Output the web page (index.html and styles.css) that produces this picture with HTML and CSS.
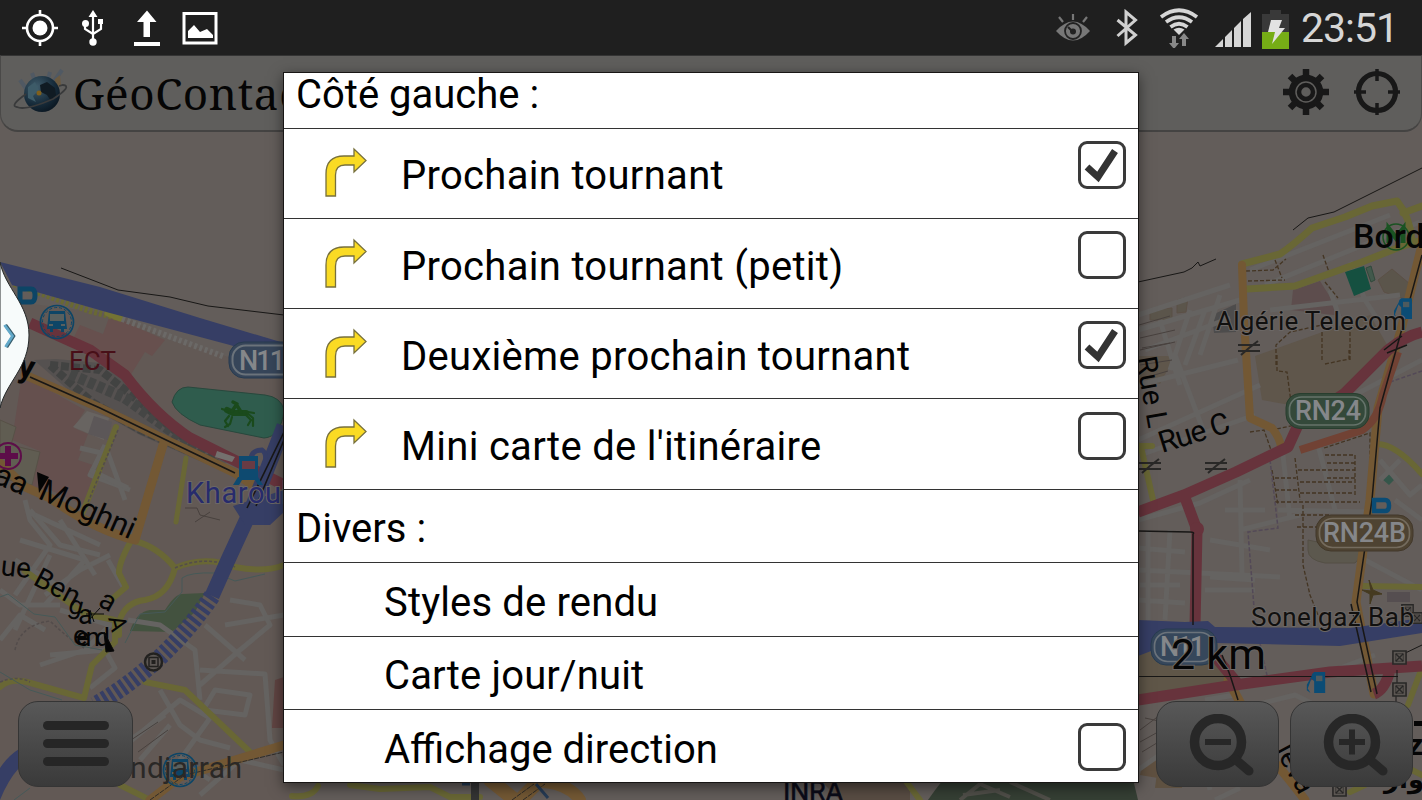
FILE: index.html
```html
<!DOCTYPE html>
<html lang="fr">
<head>
    <meta charset="UTF-8">
    <meta name="viewport" content="width=device-width, initial-scale=1.0">
    <title>GéoContact</title>
    <link rel="stylesheet" href="styles.css">
</head>
<body>

<!-- shared icons -->
<svg class="defs" width="0" height="0">
    <symbol id="turn" viewBox="0 0 44 52">
        <path d="M2 49V27Q2 9 20 9H30V2L42 13.500L30 25V18H21Q11.500 18 11.500 28V49Z" fill="#fadb24" stroke="#77703c" stroke-width="1.300"/>
    </symbol>
    <symbol id="bus" viewBox="0 0 36 36">
        <circle cx="18" cy="18" r="16.500" fill="none" stroke="#0d4566" stroke-width="1.700"/>
        <circle cx="18" cy="18" r="14.500" fill="none" stroke="#0d4566" stroke-width="1" stroke-dasharray="3 2"/>
        <path d="M10 7H26L28 25H25V28H22V25H14V28H11V25H8Z" fill="#0d4566"/>
        <path d="M11 10H25V17H11Z" fill="#58605f"/>
        <path d="M10 20h4v2h-4zM22 20h4v2h-4z" fill="#58605f"/>
    </symbol>
    <symbol id="fuel" viewBox="0 0 20 24">
        <path d="M6 2L8 0H20V23H8V10L5 7L1 18L4 23L0 20V14L5 5Z" fill="#0b4c75"/>
        <path d="M10 4h7v6h-7z" fill="#4e5a5e"/>
    </symbol>
    <symbol id="cross" viewBox="0 0 24 16">
        <path d="M1 5H23M1 11H23M4 15L12 8L21 1" stroke="#292827" stroke-width="2" fill="none"/>
    </symbol>
    <symbol id="pylon" viewBox="0 0 16 16">
        <path d="M1 1H15V15H1Z" fill="#5b5652" stroke="#292827" stroke-width="1.700"/>
        <path d="M4 4L12 12M12 4L4 12" stroke="#292827" stroke-width="1.500"/>
        <path d="M4 4H12V12H4Z" stroke="#292827" stroke-width=".7" fill="none"/>
    </symbol>
</svg>

<div class="screen">

    <!-- map background -->
    <svg class="map" viewBox="0 0 1422 800" width="1422" height="800">
        <rect width="1422" height="800" fill="#635d5a"/>

        <!-- areas -->
        <g>
            <path d="M0 300L120 315L170 340L290 375V800H0Z" fill="#625955"/>
            <path d="M70 345L80 325L103 334L110 315L165 340L152 356L145 352L130 376Z" fill="#67504e"/>
            <path d="M22 375L85 410L74 428L88 434L78 460L96 466L84 505L50 490L18 485L40 451L12 440Z" fill="#65504e"/>
            <path d="M87 411L109 418L104 440L73 427Z" fill="#686461"/>
            <path d="M94 416L112 422L108 440L88 434Z" fill="#5c5758"/>
            <path d="M0 420L16 427L11 445L40 452L32 485L0 478Z" fill="#605d52" stroke="#575147"/>
            <path d="M34 360L56 359L100 363L128 380L180 432L232 460L216 468L140 435L82 402Z" fill="#555150"/>
            <path d="M50 365L100 370L130 394L180 435L216 463L140 430L92 402Z" fill="none" stroke="#424342" stroke-width="8" stroke-dasharray="8 3"/>
            <path d="M70 374L125 398L205 455" fill="none" stroke="#454645" stroke-width="11" stroke-dasharray="7 3"/>
            <path d="M172 402Q176 387 188 387L265 395Q281 397 284 410Q281 437 264 438L200 425Q176 414 172 402Z" fill="#2f5c4d" stroke="#29483d"/>
            <path d="M130 631Q136 612 150 610L165 610Q175 594 182 594L205 593L195 612L172 632Z" fill="#43523f"/>
            <path d="M275 680L284 677V728H272Z" fill="#604442"/>
            <path d="M1138 356H1176L1163 378L1160 384L1138 378ZM1255 356L1370 315L1390 350L1330 412L1262 400Z" fill="#5f564b"/>
            <path d="M1293 290L1320 281L1342 316L1291 310Z" fill="#5d4d4d"/>
            <path d="M1378 280L1392 269L1410 284L1408 300L1384 292ZM1150 310L1172 308V320L1150 320ZM1177 300L1188 297L1186 312L1177 313Z" fill="#5b554b" stroke="#5b5046"/>
            <path d="M1212 315L1236 304V332L1214 333Z" fill="#4d4c4c"/>
            <path d="M1138 650L1225 665L1230 684L1138 700Z" fill="#5f5648"/>
            <path d="M1308 540L1365 552L1355 563L1325 563Q1308 560 1308 550Z" fill="#5c584e" stroke="#544f45"/>
            <path d="M1142 765L1158 758V778L1140 775Z" fill="#5f5040"/>
            <path d="M1157 773L1180 771L1182 788H1155Z" fill="#5e5141"/>
            <path d="M1387 592h23v10h-23z" fill="#554e50"/>
            <path d="M928 800Q942 780 948 775H1132L1138 800Z" fill="#353f34"/>
            <path d="M820 780H910V800H840Z" fill="#584c43"/>
            <path d="M1382 479l7-5 6 5-6 6z" fill="#35564a"/>
        </g>

        <!-- minor streets -->
        <g class="street">
            <path d="M105 445L90 475L130 490M108 453L125 500M25 500L30 520L50 545L15 595M30 510L60 545L100 555M20 540L85 560L45 605M50 555L15 630M45 595L80 570L110 555M60 610L110 625L85 650L40 665M0 640L20 615L45 630M50 655L105 650L115 668L90 688M0 590L20 605L60 605"/>
            <path d="M80 448L110 455M90 470L128 488M35 515L100 545M15 560L65 590M108 560L125 590M60 520L95 575M128 620L160 625L195 650L200 700M230 600L260 605L270 625L240 650L200 685M200 670L265 674L270 740L284 765M205 625L245 660M120 750L180 700L210 718L180 760L210 780M200 715L215 690L250 695L245 715L205 710M225 625L284 615M130 740L165 715M140 760L170 725M160 690L180 725L200 740L230 748M200 795L240 760L284 770"/>
            <path d="M1138 315L1230 285M1138 330L1240 300M1145 350L1230 318M1160 320L1180 385M1170 370L1190 310M1185 365L1205 310M1200 355L1220 295M1138 385L1238 360M1175 355L1205 435M1138 440L1260 385M1140 455L1255 415M1250 270L1390 215M1265 285L1420 222M1350 262L1365 300L1378 320M1330 290L1342 325M1270 310L1400 295"/>
            <path d="M1138 520L1200 503L1250 480M1148 530V620M1170 530L1165 620M1138 548L1185 552M1138 570L1280 577M1138 600L1185 603M1210 540L1270 550M1210 577L1255 580M1240 480L1242 575M1225 510H1265M1283 455L1290 520M1318 445L1335 510M1278 510L1370 512M1240 530L1300 515M1380 460L1410 495L1422 485M1345 400L1422 360M1380 480L1400 460M1395 500L1422 520M1365 560L1422 590M1205 590H1255M1140 585H1180M1255 705L1295 695L1325 710M1205 700L1235 695L1245 715M1138 770L1195 730L1210 790M1215 800L1240 788M1335 670L1375 655"/>
        </g>
        <path d="M1345 272L1364 266L1371 289L1354 296Z" fill="#155040"/>
        <path d="M1366 268L1371 266L1375 280L1371 282Z" fill="#42594c" stroke="#31493c"/>
        <g class="alley">
            <path d="M1139 325L1170 316M1140 338L1175 330M1142 348L1170 343M1140 350L1175 342M1140 365L1172 360M1144 378L1168 371M1145 718L1200 730M1140 730L1160 715M1140 742L1158 732M1142 752L1165 738M128 742l30-20M138 752l30-22"/>
            <path d="M185 508L197 508 200 515 220 520M195 522L210 512"/>
        </g>

        <!-- footpaths -->
        <g class="path">
            <path d="M1246 271L1273 270L1286 259M1248 281L1285 280M1275 260L1282 278M1323 255L1330 275M1325 282L1338 298M1276 365V345L1290 332L1322 325M1322 360V330M1350 360V325M1277 355V371L1287 372L1292 410M1325 364L1349 359V350M1250 432L1264 430L1271 450M1271 430L1296 425M1324 448L1370 433V500M1272 470L1278 505M1295 458L1300 500M1298 470H1355M1300 482H1352M1300 493H1352M1275 502H1360M1325 455H1355V495M1295 515H1330M1297 527H1330M1303 505V565L1310 595L1318 615M1275 478H1296M1275 490H1298M1327 463H1355M1327 478H1355"/>
        </g>
        <path d="M1270 460L1278 528L1248 532L1255 620L1268 680M1390 382L1422 371" fill="none" stroke="#534957" stroke-dasharray="4 2" stroke-width="1.500"/>

        <!-- secondary roads -->
        <g class="yellow">
            <path d="M116 427L83 512" stroke-width="6"/>
            <path d="M186 458L176 522" stroke-width="5"/>
            <path d="M135 541Q158 547 175 568Q205 555 235 567Q265 573 284 565M175 568Q168 596 145 600Q125 602 119 622V635M131 541Q119 562 119 573L126 587L112 599" stroke-width="6"/>
            <path d="M25 571L85 614L115 620V642L92 665L84 698L27 682Q10 678 0 687M145 682L185 690L250 752M120 785L150 800" stroke-width="6"/>
            <path d="M292 796Q312 798 318 786M350 785L380 789L430 787L450 797H480" stroke-width="6"/>
            <path d="M1242 264L1280 254Q1292 246 1312 228L1345 217L1372 206L1397 201Q1410 217 1412 240M1403 213L1422 206M1247 289L1295 286Q1320 277 1362 262L1400 247L1422 240" stroke-width="7"/>
            <path d="M1376 444Q1395 443 1422 474M1139 446H1152M1141 447L1153 500M1362 586L1422 587M1420 673L1408 705M1412 770L1422 775M1350 792L1365 785M905 780L920 800" stroke-width="6"/>
        </g>
        <path d="M14 284L90 311L118 318" fill="none" stroke="#696933" stroke-width="6" stroke-dasharray="3 2"/>
        <path d="M108 313L120 318" stroke="#747334" stroke-width="7" stroke-linecap="round"/>
        <path d="M122 319L225 357" fill="none" stroke="#6b6967" stroke-width="6" stroke-dasharray="3 2.500"/>
        <path d="M0 682Q18 675 30 682M118 430L84 512M175 568Q205 555 235 567M15 650Q20 625 50 621Q70 640 84 648" fill="none" stroke="#534c4b" stroke-width="1.500" stroke-dasharray="3 2"/>

        <!-- rivers and streams -->
        <g fill="none" stroke="#465958" stroke-width="1">
            <path d="M0 597L8 594L34 614L55 617L75 645L102 650M125 643L140 614L165 612L182 592V578Q190 572 215 573L235 581L265 574M0 672L30 690L62 700M14 800L30 788"/>
        </g>

        <!-- primary roads -->
        <g class="orange">
            <path d="M25 375L100 408L162 438L235 473L260 490" stroke-width="9"/>
            <path d="M163 445L135 540Q95 530 50 498L25 487L0 463" stroke-width="9"/>
            <path d="M150 800L180 777L284 745" stroke-width="9"/>
            <path d="M490 780L515 800M520 800L540 780" stroke-width="14"/>
            <path d="M545 782Q570 785 580 800" stroke-width="12"/>
            <path d="M1242 265L1244 320L1250 418L1272 428Q1280 438 1281 447" stroke-width="8"/>
            <path d="M1422 245L1401 330L1378 408L1370 500L1356 602L1374 694M1228 680L1241 704M1277 765Q1290 780 1305 800" stroke-width="9"/>
        </g>
        <g class="red">
            <path d="M30 323L90 350L125 375Q155 415 190 438L250 468L284 485" stroke-width="11"/>
            <path d="M1138 512L1184 495L1236 472L1288 447L1298 425L1345 393L1388 350Q1405 336 1422 332M1184 495L1197 530L1195 626L1218 660L1238 684M1138 700L1235 685L1330 672L1422 666M1374 694Q1385 690 1390 670" stroke-width="11"/>
        </g>
        <circle cx="1197" cy="529" r="7" fill="#67333c"/>
        <path d="M1300 450L1362 430Q1378 420 1383 395L1398 352" fill="none" stroke="#714234" stroke-width="8"/>
        <g class="blue">
            <path d="M0 262L100 287L200 318L284 343V362L230 345L110 313L12 285Z" fill="#363e65"/>
            <path d="M284 426L252 508L228 560L212 596" fill="none" stroke="#363e65" stroke-width="15"/>
            <path d="M233 506L284 490V512L270 525H245Z" fill="#363e65"/>
            <path d="M251 462Q250 450 262 450Q270 455 260 480" fill="none" stroke="#363e65" stroke-width="5"/>
            <path d="M212 596Q165 665 95 705" fill="none" stroke="#363e65" stroke-width="17" stroke-dasharray="4 3"/>
            <path d="M19 749V768Q8 780 0 800V768Q8 756 19 749Z" fill="#363e65"/>
            <path d="M1138 620L1185 622L1208 621L1215 627L1350 628L1422 618V633L1340 646L1215 643L1180 640L1138 656Z" fill="#363e65"/>
        </g>

        <!-- coastline and rails -->
        <g fill="none" stroke="#181716" stroke-width="1">
            <path d="M61 268L118 290L170 297L208 306L284 315M1138 282L1184 272L1192 268L1198 262L1200 266L1216 259M1293 230L1308 218L1334 212L1422 168"/>
            <path d="M30 377L100 408L162 438L235 473M284 432L247 508M284 440L256 506" stroke-width="1.600"/>
            <path d="M1422 255L1403 325L1380 408L1372 500L1357 602L1377 694M1351 604L1371 692M1193 625V534Q1195 532 1190 532L1138 531M1222 655L1230 675L1238 700M1384 350L1402 336M1387 353L1407 345" stroke-width="1.500"/>
            <path d="M1138 676.500H1398M1397 670V683M1397 657L1422 645M1396 693V706"/>
            <path d="M512 800L534 784M523 800L545 784M150 800L185 775L284 752" stroke="#2f2c28" stroke-dasharray="5 1"/>
        </g>
        <path d="M475 772V800" stroke="#343434" stroke-width="8"/>
        <path d="M462 784H470M536 784L548 798" stroke="#263b55" stroke-width="3"/>
        <path d="M217 451L235 457L232 462L215 457Z" fill="#74706e"/>
        <path d="M960 800L980 784L1010 797M1010 782L1050 800M963 795L1000 790" fill="none" stroke="#504f49" stroke-width="4"/>

        <!-- poi -->
        <path d="M20 289H31Q35 289 35 295.500Q35 302 31 302H20Z" fill="none" stroke="#0d4566" stroke-width="5"/>
        <use href="#bus" x="39" y="304" width="36" height="36"/>
        <use href="#bus" x="162" y="752" width="36" height="36"/>
        <g fill="#0e4a70">
            <path d="M239 456H258V477H239Z"/>
            <path d="M238 477L233 485H239L242 480H255L258 485H263L258 477Z"/>
            <path d="M242 461h13v8h-13z" fill="#693b44"/>
        </g>
        <g fill="none" stroke="#1a4a1c" stroke-linecap="round" stroke-linejoin="round">
            <path d="M227 410L233 413L246 413" stroke-width="6"/>
            <path d="M232 411L237 404L233 402M236 404L241 412" stroke-width="3.500"/>
            <path d="M228 411L222 409M229 416L225 421L228 426M232 417L230 424L225 427M246 415L251 420L248 425M247 413L253 418L253 426M248 412L254 413" stroke-width="2.200"/>
        </g>
        <g fill="none" stroke="#5d0d49">
            <circle cx="8" cy="456" r="13" stroke-width="2"/>
            <path d="M-2 456H18M8 446V466" stroke-width="6"/>
        </g>
        <circle cx="153.500" cy="662" r="8.500" fill="#5c5754" stroke="#22211f" stroke-width="2.500"/>
        <path d="M149 657.500H158V666.500H149Z" fill="none" stroke="#22211f" stroke-width="1.500"/>
        <path d="M151.500 660H155.500V664H151.500Z" fill="#22211f"/>
        <g fill="none" stroke="#1a5322">
            <circle cx="1396" cy="237" r="13" stroke-width="1.500"/>
            <path d="M1389 243V229L1396 238L1403 229V243" stroke-width="5"/>
        </g>
        <use href="#cross" x="1237" y="340" width="24" height="16"/>
        <use href="#cross" x="1138" y="458" width="24" height="16"/>
        <use href="#cross" x="1204" y="458" width="24" height="16"/>
        <use href="#fuel" x="1394" y="298" width="18" height="22"/>
        <use href="#fuel" x="1306" y="672" width="20" height="22"/>
        <use href="#pylon" x="1392" y="650" width="15" height="15"/>
        <use href="#pylon" x="1392" y="682" width="15" height="15"/>
        <use href="#pylon" x="1401" y="604" width="13" height="13"/>
        <use href="#pylon" x="1411" y="612" width="12" height="12"/>
        <use href="#pylon" x="1332" y="782" width="15" height="15"/>
        <path d="M1374 500H1385Q1389 500 1389 505.500Q1389 511 1385 511H1374Z" fill="none" stroke="#0b4c75" stroke-width="4.500"/>
        <path d="M1362 590L1371 591L1369 580L1373 590L1382 594L1373 595L1370 604L1370 594Z" fill="#453a20" stroke="#453a20"/>

        <!-- road shields -->
        <g class="shield">
            <rect x="229" y="342" width="84" height="36" rx="15" fill="#364559" stroke="#273b50"/>
            <rect x="232.500" y="345.500" width="80" height="29" rx="13" fill="none" stroke="#6b737b" stroke-width="2"/>
            <text x="239" y="370" textLength="46">N11</text>
            <rect x="1151" y="629" width="66" height="36" rx="15" fill="#36475b" stroke="#273b50"/>
            <rect x="1154.500" y="632.500" width="59" height="29" rx="13" fill="none" stroke="#6b737b" stroke-width="1.700"/>
            <text x="1160" y="656" textLength="45">N11</text>
            <rect x="1286" y="393.500" width="83" height="35" rx="14" fill="#34493a" stroke="#283e2e"/>
            <rect x="1289.500" y="397" width="76" height="28" rx="12" fill="none" stroke="#65736a" stroke-width="1.700"/>
            <text x="1295" y="420" textLength="66">RN24</text>
            <rect x="1316" y="515" width="97" height="36" rx="15" fill="#4e4332" stroke="#42382a"/>
            <rect x="1319.500" y="518.500" width="90" height="29" rx="13" fill="none" stroke="#746b5d" stroke-width="1.700"/>
            <text x="1323" y="541.500" textLength="83">RN24B</text>
        </g>

        <!-- place and street names -->
        <g class="label">
            <text x="69" y="370" font-size="26" fill="#480f18" textLength="47">ECT</text>
            <text x="186" y="503" font-size="29" fill="#272b6c" class="halo" textLength="112">Kharoub</text>
            <text x="130" y="778" font-size="30" fill="#2a2826" textLength="112">ndjarrah</text>
            <text x="0" y="0" font-size="32" font-weight="700" transform="translate(17 376) rotate(10)">y</text>
            <text x="0" y="0" font-size="31" transform="translate(-8 482) rotate(24)">aa</text>
            <text x="0" y="0" font-size="31" textLength="102" transform="translate(37 498) rotate(24)">Moghni</text>
            <path d="M37 472L49 477L39 493Z"/>
            <text x="0" y="0" font-size="28" transform="translate(0 575) rotate(6)">ue</text>
            <text x="0" y="0" font-size="28" textLength="48" transform="translate(32 584) rotate(28)">Ben</text>
            <text x="0" y="0" font-size="26" transform="translate(67 612) rotate(15)">g</text>
            <text x="78" y="624" font-size="27">a</text>
            <text x="0" y="0" font-size="28" transform="translate(97 605) rotate(30)">a</text>
            <text x="0" y="0" font-size="24" transform="translate(108 618) rotate(75)">A</text>
            <text x="73" y="645" font-size="27">e</text>
            <text x="76" y="646" font-size="26" textLength="34">end</text>
            <path d="M104 632L114 651L106 652ZM90 610L94 622M100 608L89 620M86 614H104" stroke="#0b0b0b"/>
            <text x="1353" y="248" font-size="34" font-weight="500" textLength="90">Borde</text>
            <text x="1216" y="330" font-size="26" fill="#11100f" class="halo" textLength="190">Algérie Telecom</text>
            <text x="1251" y="626" font-size="26" fill="#11100f" class="halo" textLength="163">Sonelgaz Bab</text>
            <text x="0" y="0" font-size="29" textLength="72" transform="translate(1136 358) rotate(80)">Rue L</text>
            <text x="0" y="0" font-size="30" textLength="73" transform="translate(1162 453) rotate(-17)">Rue C</text>
            <text x="1171" y="669" font-size="43" class="halo" textLength="95">2 km</text>
            <text x="0" y="0" font-size="29" transform="translate(1275 750) rotate(62)">leva</text>
            <text x="1408" y="755" font-size="30" font-weight="700">ze</text>
            <text x="1384" y="788" font-size="26" font-weight="700" class="arabic">زوار</text>
            <path d="M1414 721h8v5h-8z"/>
            <text x="783" y="801" font-size="27" fill="#0b0b18" stroke="#0b0b18" stroke-width=".5" textLength="60">INRA</text>
        </g>
    </svg>

    <header class="status-bar">
        <div class="status-left">
            <svg width="38" height="38" viewBox="0 0 38 38" fill="none" stroke="#fff">
                <circle cx="19" cy="19" r="13" stroke-width="2.600"/>
                <circle cx="19" cy="19" r="7.500" fill="#fff" stroke="none"/>
                <path d="M19 1V7M19 31V37M1 19H7M31 19H37" stroke-width="2.600"/>
            </svg>
            <svg width="24" height="38" viewBox="0 0 24 38" fill="none" stroke="#fff" stroke-width="2.200">
                <path d="M12 5V33M4 15V20L12 25M20 13V20L12 25"/>
                <circle cx="12" cy="33" r="3.700" fill="#fff" stroke="none"/>
                <circle cx="4.500" cy="14.500" r="3.500" fill="#fff" stroke="none"/>
                <path d="M17 10H22V15H17ZM12 1L16.500 8H7.500Z" fill="#fff" stroke="none"/>
            </svg>
            <svg width="28" height="38" viewBox="0 0 28 38" fill="#fff">
                <path d="M14 1.500L23.500 13H17V28H10.500V13H4ZM1 33H27V37H1Z"/>
            </svg>
            <svg width="36" height="38" viewBox="0 0 36 38" fill="none" stroke="#fff">
                <path d="M2 4.500H34V34H2Z" stroke-width="3"/>
                <path d="M6 29V22L12 16L18 23L25 20L31 26V29Z" fill="#fff" stroke="none"/>
            </svg>
        </div>
        <div class="status-right">
            <svg width="36" height="38" viewBox="0 0 36 38" fill="none" stroke="#777" stroke-width="2.200">
                <path d="M1 22Q18 3 35 22Q18 41 1 22Z" fill="#777" stroke="none"/>
                <circle cx="18" cy="22" r="8" stroke="#222" stroke-width="1.800"/>
                <circle cx="18" cy="22.500" r="3" fill="#222" stroke="none"/>
                <path d="M17 22L13 18" stroke="#222"/>
                <path d="M18 5V11M4 8L8 13M32 8L28 13"/>
            </svg>
            <svg class="bluetooth" width="22" height="38" viewBox="0 0 22 38" fill="none" stroke="#d0d0d0" stroke-width="3">
                <path d="M1.500 11L19.500 26L10 34V3L19.500 11L1.500 27"/>
            </svg>
            <svg class="wifi" width="40" height="40" viewBox="0 0 40 40" fill="none" stroke="#d6d6d6" stroke-width="3.700">
                <path d="M2 9Q20 -4.500 38 9M7 14Q20 4.500 33 14M11.500 19Q20 12.500 28.500 19"/>
                <path d="M14.500 21.500Q20 18 25.500 21.500L20 27Z" fill="#d6d6d6" stroke="none"/>
                <path d="M13 28H17V35H20L15 41L10 35H13ZM23 38V31H20L25 25L30 31H27V38Z" fill="#888" stroke="none"/>
            </svg>
            <svg class="signal" width="36" height="36" viewBox="0 0 36 36" fill="#d6d6d6">
                <path d="M0 35L8 27V35ZM10 25L17 18V35H10ZM19 16L26 9V35H19ZM28 7L36 0V35H28Z"/>
            </svg>
            <svg class="battery" width="27" height="40" viewBox="0 0 27 40">
                <path d="M0 5H8V1H19V5H27V40H0Z" fill="#393939"/>
                <path d="M0 23H27V40H0Z" fill="#76ad16"/>
                <path d="M9 11H20L17 19H23L10 35L13 23H6Z" fill="#e2e2e2"/>
            </svg>
            <span class="clock">23:51</span>
        </div>
    </header>

    <div class="app-bar">
        <div class="brand">
            <svg class="globe" width="56" height="50" viewBox="0 0 56 50">
                <defs>
                    <radialGradient id="earth" cx=".35" cy=".3" r=".8">
                        <stop offset="0" stop-color="#405c6b"/>
                        <stop offset=".6" stop-color="#172c3b"/>
                        <stop offset="1" stop-color="#08131d"/>
                    </radialGradient>
                </defs>
                <path d="M7 13L17 27M19 6L25 22M49 3L37 20M37 5L33 20" stroke="#505963" stroke-width="4"/>
                <path d="M42 12L47 8L48 18L39 23Z" fill="#6b5a40"/>
                <circle cx="29" cy="27" r="18" fill="url(#earth)"/>
                <path d="M27 18L34 15L42 21L43 28L38 34L34 28L28 25Z" fill="#101b23"/>
                <path d="M15 20L22 15L26 23L20 29L23 35L15 31Z" fill="#3d5b68"/>
                <circle cx="26" cy="26" r="2.500" fill="#80601c"/>
                <path d="M13 27Q-4 39 4 40Q12 44 40 32Q60 19 50 18L46 19" fill="none" stroke="#393a3b" stroke-width="1.800"/>
            </svg>
            <span class="title">GéoContact</span>
        </div>
        <div class="app-actions">
            <svg width="48" height="48" viewBox="0 0 48 48" fill="none" stroke="#181818">
                <circle cx="24" cy="24" r="14" stroke-width="6.500"/>
                <circle cx="24" cy="24" r="7" stroke-width="4.500"/>
                <path d="M24 1V10M24 38V47M1 24H10M38 24H47M8 8L14 14M34 34L40 40M40 8L34 14M14 34L8 40" stroke-width="6.500"/>
            </svg>
            <svg width="48" height="48" viewBox="0 0 48 48" fill="none" stroke="#181818">
                <circle cx="24" cy="24" r="18.500" stroke-width="5.200"/>
                <path d="M24 1V13M24 35V47M1 24H13M35 24H47" stroke-width="3.500"/>
            </svg>
        </div>
    </div>

    <!-- side drawer handle -->
    <svg class="handle" width="32" height="152" viewBox="0 0 32 152">
        <path d="M0 2C5 28 29 44 29 75C29 108 6 122 0 148Z" fill="#f7fbfb" stroke="#25292a" stroke-width="1"/>
        <path d="M5.500 65L13.500 76L6.500 87" fill="none" stroke="#385d6c" stroke-width="3.500"/>
        <path d="M4.500 65L12.500 76L5.500 87" fill="none" stroke="#62a9ca" stroke-width="2.800"/>
    </svg>

    <div class="map-btn menu-btn">
        <svg width="66" height="46" viewBox="0 0 66 46" fill="#262626">
            <rect y="0" width="66" height="9" rx="4.500"/>
            <rect y="18" width="66" height="9" rx="4.500"/>
            <rect y="36" width="66" height="9" rx="4.500"/>
        </svg>
    </div>
    <div class="zoom-group">
        <div class="map-btn">
            <svg width="66" height="62" viewBox="0 0 66 62" fill="none" stroke="#272727">
                <circle cx="29" cy="28" r="23.500" stroke-width="9.500"/>
                <path d="M46 45L60 57" stroke-width="9" stroke-linecap="round"/>
                <path d="M16 28H42" stroke-width="6"/>
            </svg>
        </div>
        <div class="map-btn">
            <svg width="66" height="62" viewBox="0 0 66 62" fill="none" stroke="#272727">
                <circle cx="29" cy="28" r="23.500" stroke-width="9.500"/>
                <path d="M46 45L60 57" stroke-width="9" stroke-linecap="round"/>
                <path d="M16 28H42M29 15.500V40.500" stroke-width="6"/>
            </svg>
        </div>
    </div>

    <div class="dialog">
        <div class="row section first"><span>Côté gauche :</span></div>
        <div class="row item">
            <svg class="turn"><use href="#turn"/></svg>
            <span class="name">Prochain tournant</span>
            <span class="check"><svg viewBox="0 0 48 48"><path d="M9 26L20 36L37 10"/></svg></span>
        </div>
        <div class="row item">
            <svg class="turn"><use href="#turn"/></svg>
            <span class="name">Prochain tournant (petit)</span>
            <span class="check"></span>
        </div>
        <div class="row item">
            <svg class="turn"><use href="#turn"/></svg>
            <span class="name">Deuxième prochain tournant</span>
            <span class="check"><svg viewBox="0 0 48 48"><path d="M9 26L20 36L37 10"/></svg></span>
        </div>
        <div class="row item">
            <svg class="turn"><use href="#turn"/></svg>
            <span class="name">Mini carte de l'itinéraire</span>
            <span class="check"></span>
        </div>
        <div class="row section"><span>Divers :</span></div>
        <div class="row plain"><span class="name">Styles de rendu</span></div>
        <div class="row plain"><span class="name">Carte jour/nuit</span></div>
        <div class="row plain"><span class="name">Affichage direction</span><span class="check"></span></div>
    </div>
</div>

</body>
</html>
```
FILE: styles.css
```css
* { box-sizing: border-box; }

body {
    margin: 0;
    font-family: Roboto, sans-serif;
    background: #635d5a;
    overflow: hidden;
}

svg { display: block; flex: none; }
.defs { position: absolute; }

.screen {
    position: relative;
    width: 1422px;
    height: 800px;
    overflow: hidden;
}

/* Map */
.map { position: absolute; top: 0; left: 0; }
.street path { fill: none; stroke: #656361; stroke-width: 5; stroke-linejoin: round; }
.alley path { fill: none; stroke: #48413e; stroke-width: 1; }
.path path { fill: none; stroke: #443523; stroke-width: 1.3; stroke-dasharray: 4 2; }
.yellow path { fill: none; stroke: #696735; stroke-linecap: round; stroke-linejoin: round; }
.orange path { fill: none; stroke: #735834; stroke-linecap: round; stroke-linejoin: round; }
.red path { fill: none; stroke: #67333c; stroke-linejoin: round; }
.shield text { font-size: 27px; font-weight: 500; fill: #85878a; }
.label { fill: #050505; }
.halo { paint-order: stroke; stroke: #6b6765; stroke-width: 2px; }
.arabic { font-family: "DejaVu Sans", sans-serif; }

/* Status bar */
.status-bar {
    position: relative;
    height: 55px;
    background: #1f1f1f;
    display: flex;
    justify-content: space-between;
    padding: 0 26px 0 21px;
}

.status-left, .status-right { display: flex; align-items: center; }
.status-left svg:nth-child(2) { margin-left: 22px; }
.status-left svg:nth-child(3) { margin-left: 28px; }
.status-left svg:nth-child(4) { margin-left: 21px; }
.bluetooth { margin-left: 25px; }
.wifi { margin-left: 21px; }
.signal { margin-left: 16px; margin-top: 4px; }
.battery { margin-left: 11px; margin-top: 2px; }
.clock {
    font-size: 41px;
    line-height: 55px;
    letter-spacing: -1px;
    color: #d6d6d6;
    width: 95px;
    margin-left: 12px;
    padding-top: 1px;
    white-space: nowrap;
}

/* App header */
.app-bar {
    position: relative;
    height: 77px;
    background: #5f5e5c;
    border: 1px solid #4a4948;
    border-bottom: 2px solid #444342;
    border-top: 1px solid #343434;
    border-radius: 0 0 18px 18px;
    display: flex;
    justify-content: space-between;
    align-items: center;
    padding: 0 20px 3px 12px;
}

.brand { display: flex; align-items: center; }
.title {
    font-family: "Noto Serif", "Droid Serif", "DejaVu Serif", serif;
    font-size: 44px;
    line-height: 60px;
    letter-spacing: 0.6px;
    margin-left: 4px;
    padding-top: 2px;
    color: #050505;
}
.app-actions { display: flex; gap: 23px; }

.handle { position: absolute; left: 0; top: 260px; }

/* Floating map buttons */
.map-btn {
    width: 123px;
    height: 86px;
    border-radius: 20px;
    border: 1px solid #353535;
    background: linear-gradient(#585858, #3a3a3a);
    display: flex;
    align-items: center;
    justify-content: center;
}

.menu-btn { position: absolute; left: 18px; top: 701px; width: 115px; }
.zoom-group {
    position: absolute;
    left: 1156px;
    top: 701px;
    display: flex;
    gap: 11px;
}
.zoom-group svg { margin-left: 8px; margin-top: 2px; }

/* Layer dialog */
.dialog {
    position: absolute;
    left: 284px;
    top: 73px;
    width: 854px;
    height: 709px;
    overflow: hidden;
    background: #fff;
    color: #000;
    font-size: 40px;
    box-shadow: 0 0 0 1px #181615, 0 4px 13px 1px rgba(0,0,0,0.5);
}

.row {
    display: flex;
    align-items: center;
    height: 73.4px;
    border-bottom: 1px solid #333;
    white-space: nowrap;
}

.section { padding-left: 12px; padding-top: 6px; }
.first { height: 55.6px; padding: 0 0 11px 12px; }
.item { height: 90.3px; padding-left: 40px; }
.item .name { margin-left: 33px; padding-top: 5px; letter-spacing: 0.3px; }
.plain { padding-left: 100px; }
.plain .name { padding-top: 6px; letter-spacing: 0.15px; font-variant-ligatures: common-ligatures; }
.plain:last-child { border-bottom: none; }
.plain:last-child .name { letter-spacing: 0; }

.turn { width: 44px; height: 52px; }

.check {
    width: 48px;
    height: 48px;
    margin-left: auto;
    margin-right: 12px;
    border: 3px solid #3a3a3a;
    border-radius: 9px;
    background: #fff;
}
.check svg { width: 48px; height: 48px; margin: -3px; }
.check path { fill: none; stroke: #333; stroke-width: 7; }
.item .check { margin-bottom: 17px; }
```
